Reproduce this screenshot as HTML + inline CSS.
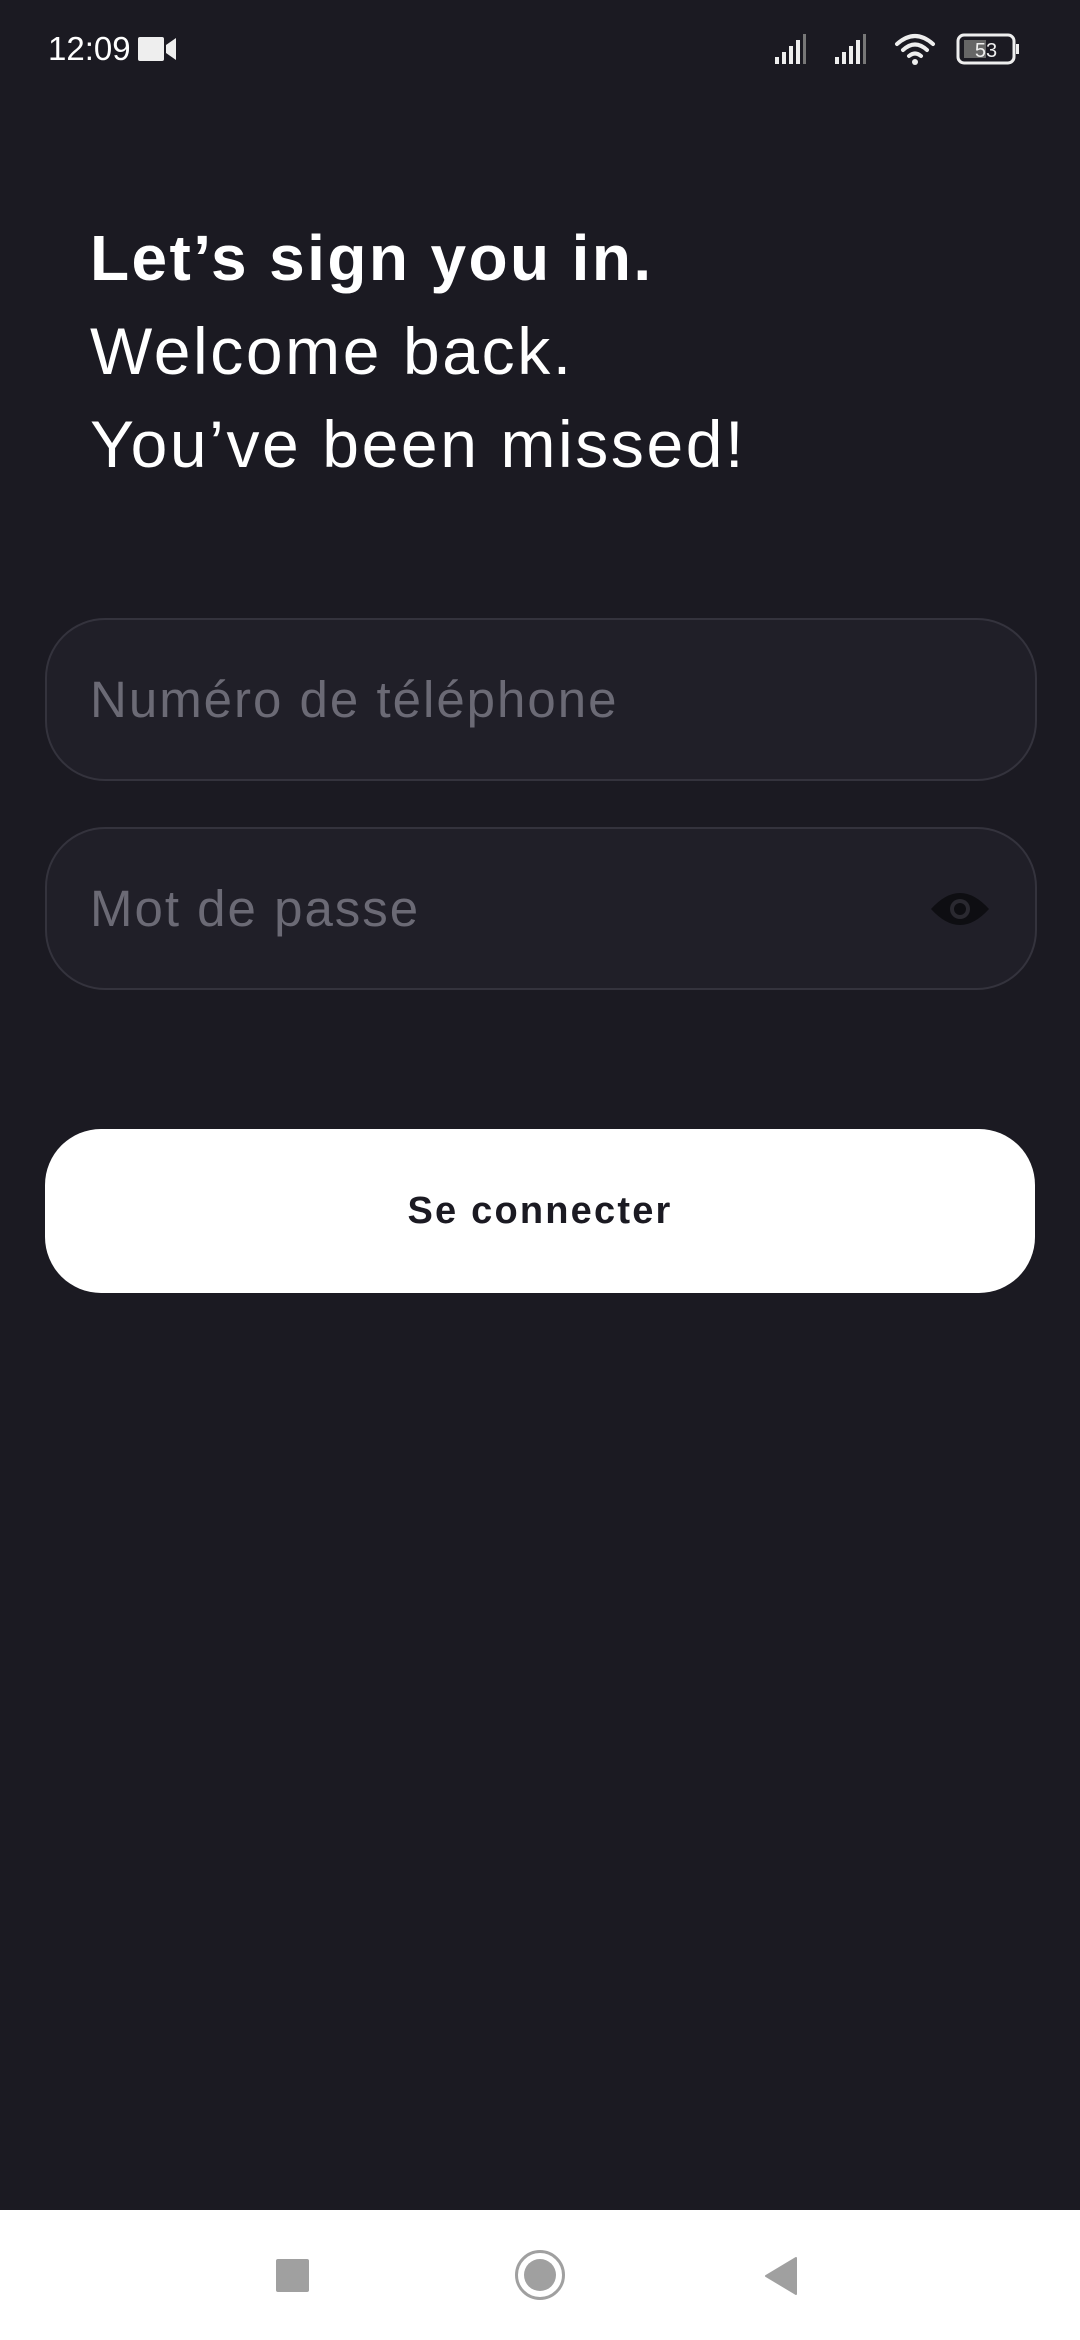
<!DOCTYPE html>
<html><head><meta charset="utf-8">
<style>
html,body{margin:0;padding:0;}
body{width:1080px;height:2340px;background:#1b1a22;position:relative;overflow:hidden;font-family:"Liberation Sans",sans-serif;color:#fff;}
.abs{position:absolute;}
.h{left:90px;font-size:66px;line-height:93px;letter-spacing:2.6px;white-space:nowrap;}
.field{left:45px;width:988px;height:159px;border:2px solid #34333d;border-radius:60px;background:#201f28;}
.ph{position:absolute;left:43px;top:0;line-height:159px;font-size:51px;color:#6b6a75;letter-spacing:2px;}
.btn{left:45px;top:1129px;width:990px;height:164px;background:#fff;border-radius:56px;color:#1b1a22;font-weight:bold;font-size:38px;text-align:center;line-height:164px;letter-spacing:2.2px;}
.nav{left:0;top:2210px;width:1080px;height:130px;background:#fff;}
</style></head><body>
<div class="abs" style="left:48px;top:29px;font-size:33px;line-height:40px;">12:09</div>
<svg class="abs" style="left:138px;top:36px" width="40" height="26" viewBox="0 0 40 26"><rect x="0" y="1" width="26" height="24" rx="2" fill="#eee"/><path d="M28 9 L38 2 V24 L28 17Z" fill="#eee"/></svg>
<svg class="abs" style="left:770px;top:30px" width="260" height="40" viewBox="0 0 260 40">
<g fill="#eee"><rect x="5" y="27" width="4" height="7"/><rect x="12" y="22" width="4" height="12"/><rect x="19" y="16" width="4" height="18"/><rect x="26" y="10" width="4" height="24"/></g><rect x="33" y="4" width="3" height="30" fill="#777"/>
<g fill="#eee"><rect x="65" y="27" width="4" height="7"/><rect x="72" y="22" width="4" height="12"/><rect x="79" y="16" width="4" height="18"/><rect x="86" y="10" width="4" height="24"/></g><rect x="93" y="4" width="3" height="30" fill="#777"/>
<g fill="none" stroke="#eee" stroke-width="4" stroke-linecap="round"><path d="M127 14 Q145 -2 163 14"/><path d="M133 20 Q145 9 157 20"/><path d="M139 26 Q145 21 151 26"/></g><circle cx="145" cy="32" r="3" fill="#eee"/>
<rect x="188" y="5" width="56" height="28" rx="6" fill="none" stroke="#eee" stroke-width="3"/><rect x="194" y="10" width="22" height="18" fill="#666"/><rect x="246" y="14" width="3" height="10" fill="#eee"/>
<text x="216" y="27" font-size="20" fill="#eee" text-anchor="middle" font-family="Liberation Sans">53</text></svg>

<div class="abs h" style="top:212px;font-weight:bold;font-size:64px;letter-spacing:2.4px;">Let’s sign you in.</div>
<div class="abs h" style="top:305px;">Welcome back.</div>
<div class="abs h" style="top:398px;">You’ve been missed!</div>

<div class="abs field" style="top:618px;"><div class="ph">Numéro de téléphone</div></div>
<div class="abs field" style="top:827px;"><div class="ph">Mot de passe</div>
<svg style="position:absolute;left:882px;top:60px" width="62" height="40" viewBox="0 0 62 40"><path d="M2 20 Q31 -12 60 20 Q31 52 2 20Z" fill="#0e0e12"/><circle cx="31" cy="20" r="10" fill="#2a2930"/><circle cx="31" cy="20" r="6" fill="#0e0e12"/></svg></div>

<div class="abs btn">Se connecter</div>

<div class="abs nav">
<div class="abs" style="left:276px;top:49px;width:33px;height:33px;background:#a0a0a0;border-radius:2px;"></div>
<div class="abs" style="left:515px;top:40px;width:44px;height:44px;border:3px solid #a0a0a0;border-radius:50%;"></div>
<div class="abs" style="left:524px;top:49px;width:32px;height:32px;background:#a0a0a0;border-radius:50%;"></div>
<svg class="abs" style="left:764px;top:46px" width="36" height="40" viewBox="0 0 36 40"><path d="M32 2 V38 L2 20Z" fill="#a0a0a0" stroke="#a0a0a0" stroke-linejoin="round" stroke-width="2"/></svg>
</div>
</body></html>
